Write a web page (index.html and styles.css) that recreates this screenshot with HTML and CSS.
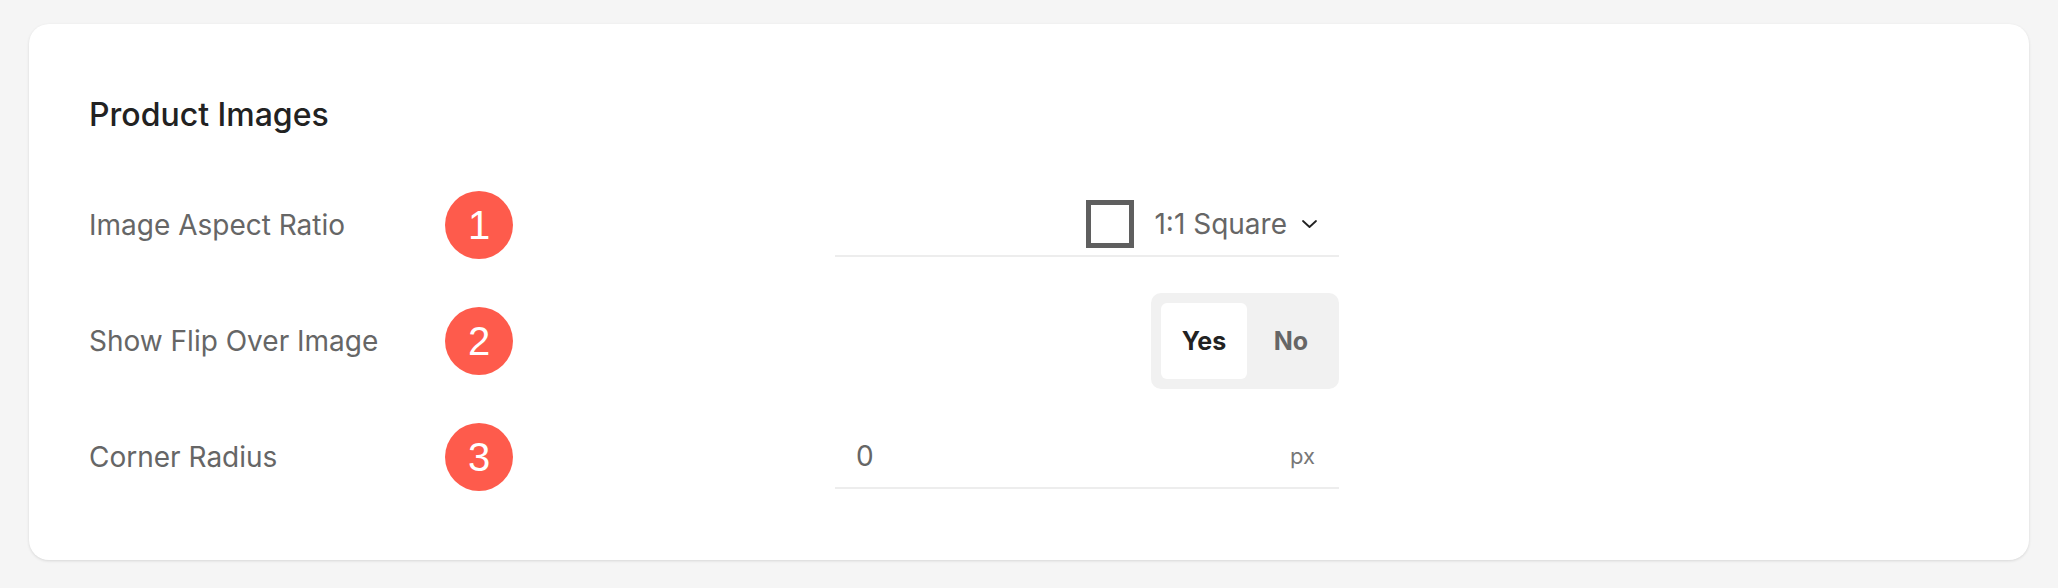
FILE: index.html
```html
<!DOCTYPE html>
<html lang="en">
<head>
    <meta charset="UTF-8">
    <meta name="viewport" content="width=device-width, initial-scale=1.0">
    <title>Product Images</title>
    <link rel="stylesheet" href="styles.css">
</head>
<body>
    <div class="card">
        <h2 class="card-title">Product Images</h2>
        <div class="settings">
            <div class="setting-label">Image Aspect Ratio</div>
            <div class="badge">1</div>
            <div class="spacer"></div>
            <div class="field field-select">
                <span class="ratio-box"></span>
                <span class="field-value">1:1 Square</span>
                <svg class="chevron" width="15" height="8" viewBox="0 0 15 8">
                    <path d="M1 1l6.5 6 6.5-6" fill="none" stroke="#222" stroke-width="1.8" stroke-linecap="round" stroke-linejoin="round"/>
                </svg>
            </div>

            <div class="setting-label">Show Flip Over Image</div>
            <div class="badge">2</div>
            <div class="spacer"></div>
            <div class="toggle">
                <span class="toggle-option active">Yes</span>
                <span class="toggle-option">No</span>
            </div>

            <div class="setting-label">Corner Radius</div>
            <div class="badge">3</div>
            <div class="spacer"></div>
            <div class="field field-input">
                <span class="field-value">0</span>
                <span class="unit">px</span>
            </div>
        </div>
    </div>
</body>
</html>
```

FILE: styles.css
```css
body {
    margin: 0;
    padding: 24px 29px;
    background-color: #f5f5f5;
    font-family: Inter, "Noto Sans", sans-serif;
}

.card {
    background-color: white;
    border-radius: 20px;
    box-shadow: 0 1px 3px rgba(0, 0, 0, 0.12);
    padding: 71px 60px 55px;
}

.card-title {
    margin: 0 0 42px;
    font-size: 32px;
    line-height: 40px;
    font-weight: 500;
    color: #222;
}

.settings {
    display: grid;
    grid-template-columns: 356px 68px 322px 504px;
    grid-auto-rows: 96px;
    row-gap: 20px;
    align-items: center;
}

.setting-label {
    font-size: 28px;
    color: #666;
}

.badge {
    width: 68px;
    height: 68px;
    border-radius: 50%;
    background-color: #fe5b4c;
    color: white;
    font-family: "Liberation Sans", Arial, sans-serif;
    font-size: 40px;
    display: flex;
    align-items: center;
    justify-content: center;
}

.field {
    display: flex;
    align-items: center;
    height: 62px;
    border-bottom: 2px solid #ededed;
    font-size: 28px;
    color: #666;
}

.field-select {
    justify-content: flex-end;
    padding-right: 22px;
}

.ratio-box {
    width: 38px;
    height: 38px;
    border: 5px solid #5f5f5f;
    margin-right: 20px;
}

.chevron {
    margin-left: 15px;
}

.field-input {
    justify-content: space-between;
    padding: 0 24px 0 21px;
}

.unit {
    font-size: 22px;
    color: #777;
}

.toggle {
    justify-self: end;
    display: flex;
    padding: 10px;
    background-color: #f1f1f1;
    border-radius: 10px;
}

.toggle-option {
    width: 82px;
    height: 76px;
    padding-left: 6px;
    box-sizing: border-box;
    display: flex;
    align-items: center;
    justify-content: center;
    font-size: 25px;
    font-weight: 700;
    color: #666;
}

.toggle-option.active {
    width: 86px;
    padding-left: 0;
    background-color: white;
    border-radius: 6px;
    color: #222;
}
```
